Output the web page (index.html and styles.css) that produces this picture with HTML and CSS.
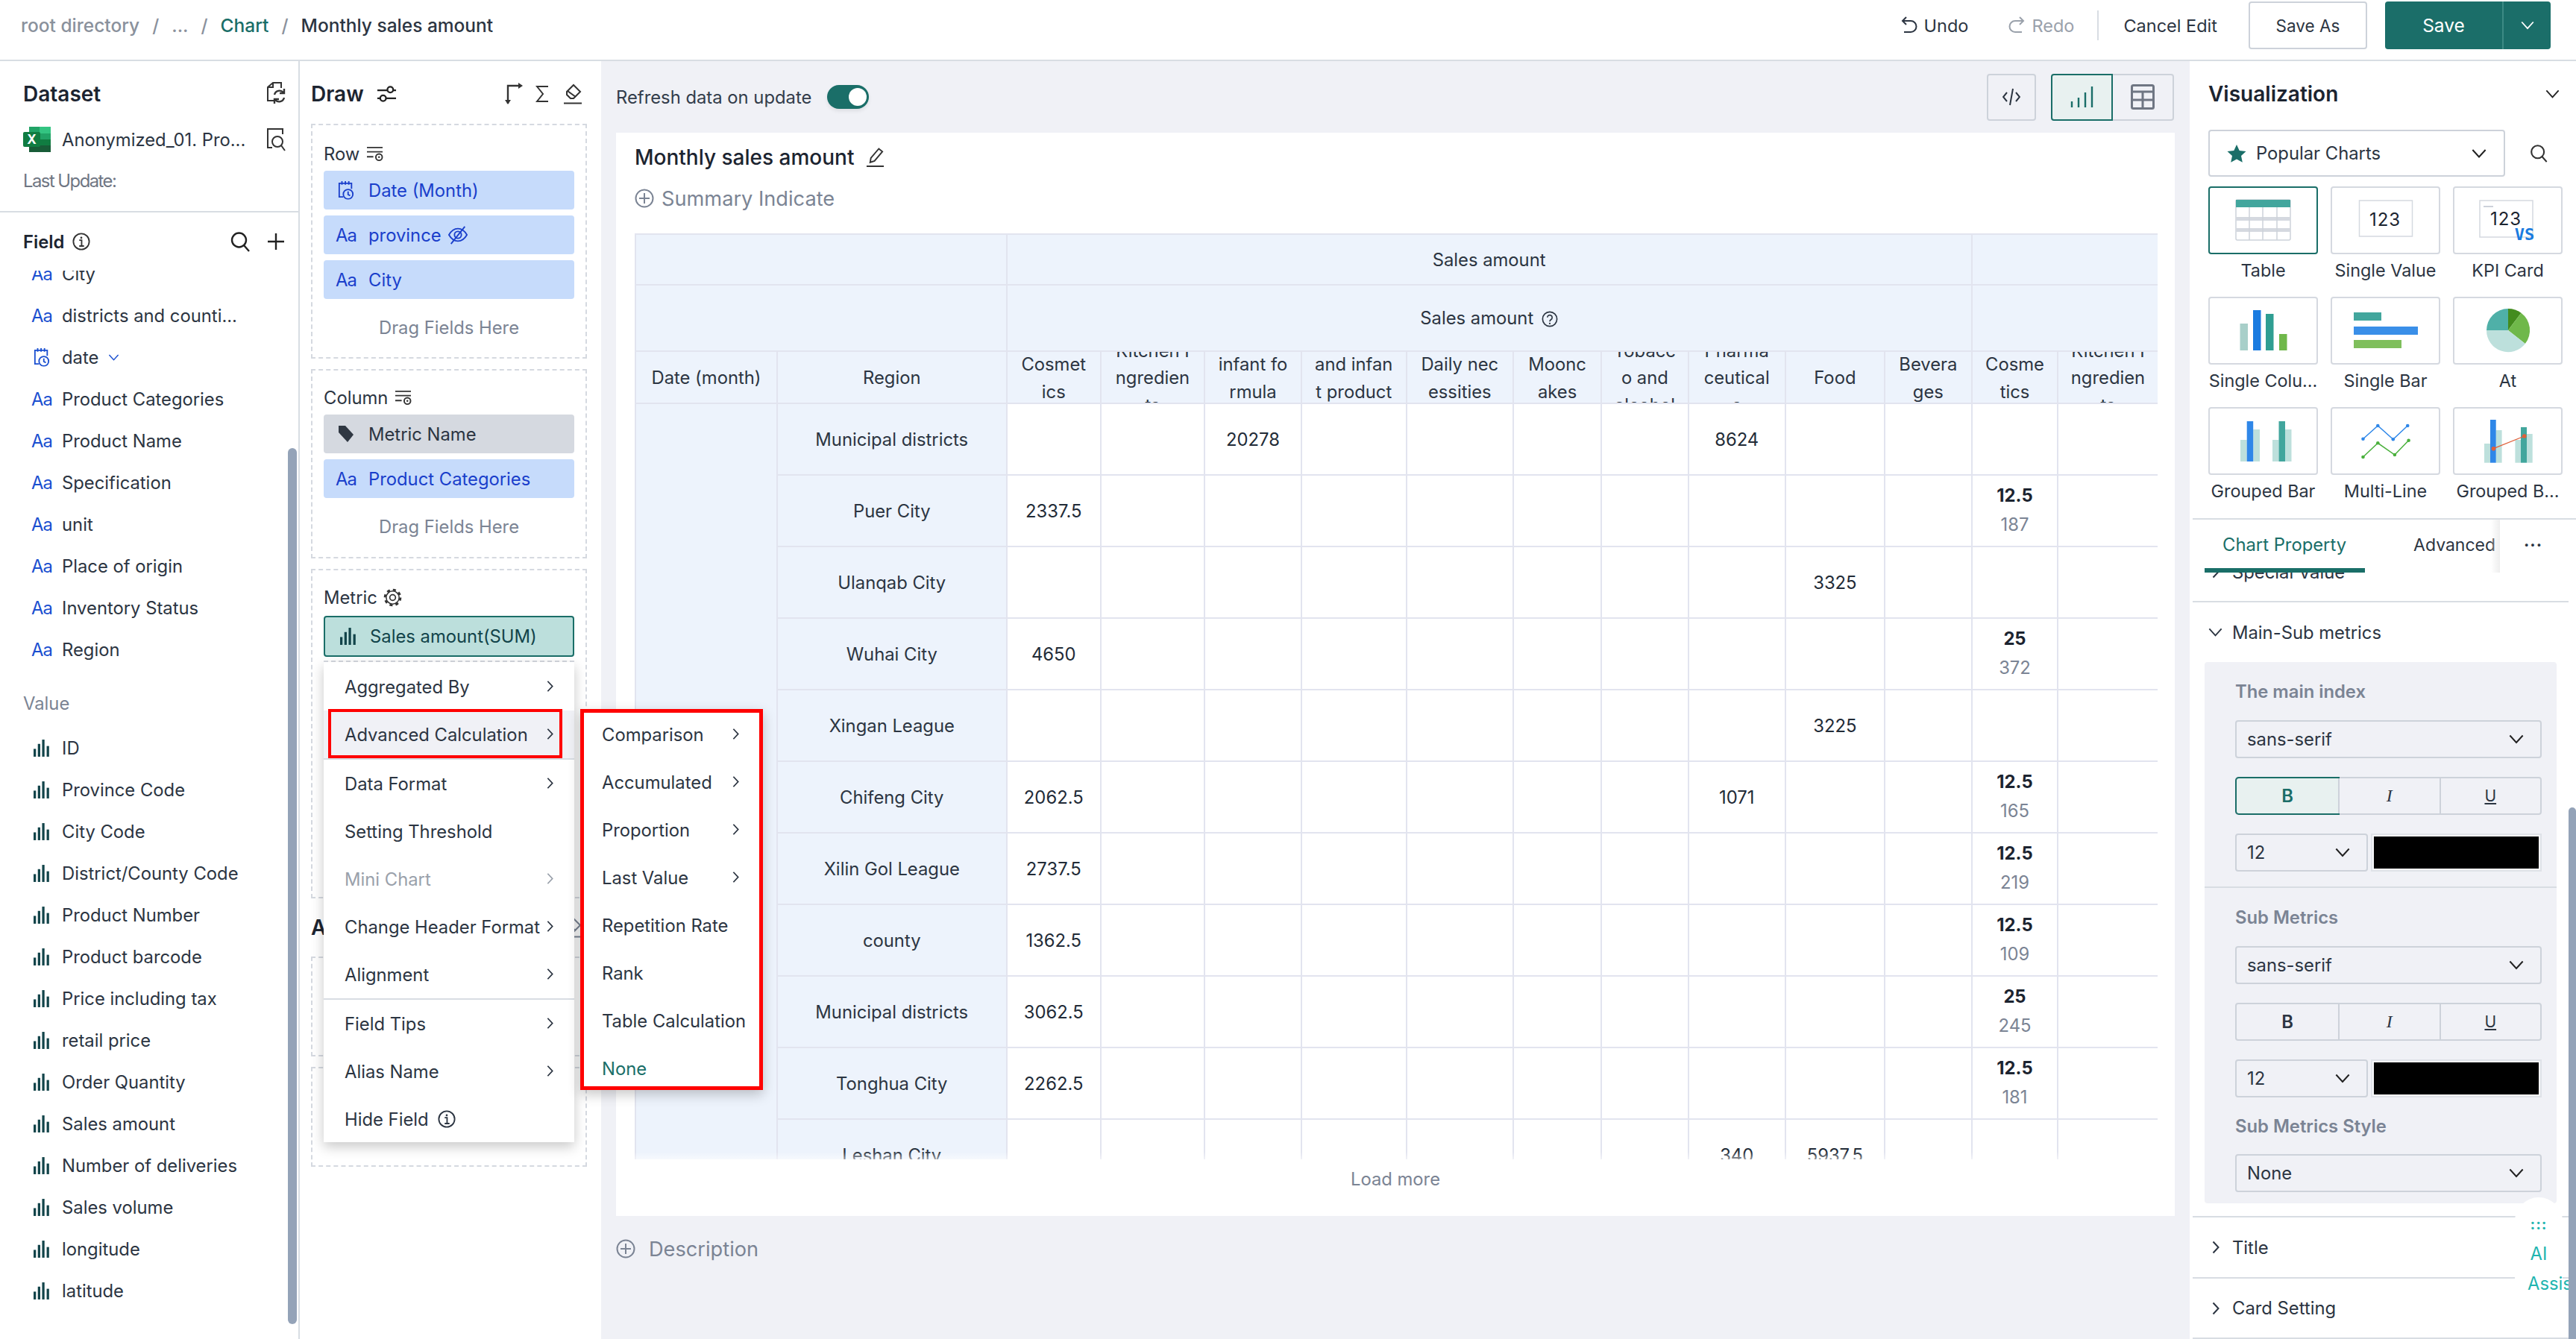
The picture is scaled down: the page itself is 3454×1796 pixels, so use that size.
FILE: index.html
```html
<!DOCTYPE html>
<html lang="en">
<head>
<meta charset="utf-8">
<title>Monthly sales amount</title>
<link rel="stylesheet" href="styles.css">
</head>
<body>
<svg class="defs" xmlns="http://www.w3.org/2000/svg">
  <symbol id="bars" viewBox="0 0 22 24"><rect x="0" y="13" width="3.4" height="11"/><rect x="6" y="6" width="3.4" height="18"/><rect x="12" y="0" width="3.4" height="24"/><rect x="18.4" y="9" width="3.4" height="15"/></symbol>
  <symbol id="cal" viewBox="0 0 24 28"><path d="M8 24H2V4h18v8M6 1v5M11 1v5M16 1v5" fill="none" stroke="currentColor" stroke-width="2"/><circle cx="15" cy="20" r="7" fill="none" stroke="currentColor" stroke-width="2"/><path d="M15 16v4.500l3 1.500" fill="none" stroke="currentColor" stroke-width="2"/></symbol>
  <symbol id="cr" viewBox="0 0 10 18"><path d="M1.500 1.500l7 7.500-7 7.500" fill="none" stroke="currentColor" stroke-width="2"/></symbol>
  <symbol id="cd" viewBox="0 0 22 14"><path d="M1.500 1.500L11 12l9.500-10.500" fill="none" stroke="currentColor" stroke-width="2.200"/></symbol>
  <symbol id="info" viewBox="0 0 26 26"><circle cx="13" cy="13" r="11.500" fill="none" stroke="currentColor" stroke-width="2"/><circle cx="13" cy="7.500" r="1.500" fill="currentColor"/><path d="M10 11h3.500v8M10 19.500h7" fill="none" stroke="currentColor" stroke-width="2"/></symbol>
  <symbol id="plusc" viewBox="0 0 26 26"><circle cx="13" cy="13" r="11.500" fill="none" stroke="currentColor" stroke-width="2"/><path d="M13 6v14M6 13h14" fill="none" stroke="currentColor" stroke-width="2"/></symbol>
  <symbol id="search" viewBox="0 0 26 28"><circle cx="11.500" cy="12" r="9.500" fill="none" stroke="currentColor" stroke-width="2.400"/><path d="M18 19l7 8" fill="none" stroke="currentColor" stroke-width="2.400"/></symbol>
  <symbol id="plus" viewBox="0 0 24 24"><path d="M12 1v22M1 12h22" fill="none" stroke="currentColor" stroke-width="2.400"/></symbol>
  <symbol id="sort" viewBox="0 0 24 22"><path d="M1 2h22M1 8h22M1 15h9" fill="none" stroke="currentColor" stroke-width="2"/><circle cx="18" cy="15.500" r="4.500" fill="none" stroke="currentColor" stroke-width="2"/><circle cx="18" cy="15.500" r="1.300" fill="currentColor"/></symbol>
  <symbol id="eraser" viewBox="0 0 26 28"><path d="M14 2l9 9-9 9-4 0-5-5v-4z" fill="none" stroke="currentColor" stroke-width="2"/><path d="M6 10l11 8" fill="none" stroke="currentColor" stroke-width="2"/><path d="M1 26.500h24" fill="none" stroke="currentColor" stroke-width="2"/></symbol>
  <symbol id="pencil" viewBox="0 0 26 28"><path d="M18 2l5 4-11 13-6 2 1-6z" fill="none" stroke="currentColor" stroke-width="2"/><path d="M1 26.500h24" fill="none" stroke="currentColor" stroke-width="2"/></symbol>
</svg>

<div class="app">
  <header class="topbar">
    <nav class="crumbs">
      <span class="mute">root directory</span><span class="sep">/</span><span class="mute">...</span><span class="sep">/</span><span class="crumb-link">Chart</span><span class="sep">/</span><span class="crumb-cur">Monthly sales amount</span>
    </nav>
    <div class="actions">
      <span class="act"><svg class="i20" viewBox="0 0 22 24"><path d="M7 1L2 6l5 5M2 6h11a7.500 7.500 0 0 1 0 15H4" fill="none" stroke="currentColor" stroke-width="2"/></svg>Undo</span>
      <span class="act dis"><svg class="i20" viewBox="0 0 22 24"><path d="M15 1l5 5-5 5M20 6H9a7.500 7.500 0 0 0 0 15h9" fill="none" stroke="currentColor" stroke-width="2"/></svg>Redo</span>
      <span class="vsep"></span>
      <span class="cancel">Cancel Edit</span>
      <span class="btn-out">Save As</span>
      <span class="btn-save"><span class="sv">Save</span><span class="sv-d"><svg class="chev" viewBox="0 0 22 14"><use href="#cd"/></svg></span></span>
    </div>
  </header>

  <main class="main">
    <aside class="left">
      <div class="head"><h2 class="h2">Dataset</h2>
        <svg class="ic26" viewBox="0 0 26 34"><path d="M10 26H2V8l7-6h11v7M9 2v6H2" fill="none" stroke="#333" stroke-width="2"/><path d="M11 18a7 7 0 0 1 12-3M24 22a7 7 0 0 1-12 3M24 10v6h-6M11 30v-6h6" fill="none" stroke="#333" stroke-width="2.400"/></svg>
      </div>
      <div class="ds-row">
        <svg class="excel" viewBox="0 0 37 34"><rect x="8" width="29" height="34" rx="2" fill="#21a366"/><rect x="8" y="0" width="14" height="9" fill="#21a366"/><rect x="22" y="0" width="15" height="9" fill="#33c481"/><rect x="22" y="9" width="15" height="8" fill="#21a366"/><rect x="22" y="17" width="15" height="8" fill="#107c41"/><rect x="8" y="25" width="29" height="9" fill="#185c37"/><rect y="7" width="23" height="20" rx="2" fill="#107c41"/><text x="11.500" y="23" class="xl">X</text></svg>
        <span class="ds-name">Anonymized_01. Pro...</span>
        <svg class="ic26" viewBox="0 0 26 34"><path d="M8 28H2V3h20v7" fill="none" stroke="#333" stroke-width="2"/><circle cx="15" cy="20" r="7" fill="none" stroke="#333" stroke-width="2"/><path d="M20 25l5 7" stroke="#333" stroke-width="2"/></svg>
      </div>
      <div class="last">Last Update:</div>
      <div class="field-head">
        <span class="fh-title">Field</span>
        <svg class="ic24 mlr" viewBox="0 0 26 26"><use href="#info"/></svg>
        <span class="spacer"></span>
        <svg class="ic-s" viewBox="0 0 26 28"><use href="#search"/></svg>
        <svg class="ic-p" viewBox="0 0 24 24"><use href="#plus"/></svg>
      </div>
      <div class="list">
        <div class="list-in">
          <div class="fr"><span class="aa">Aa</span>City</div>
          <div class="fr"><span class="aa">Aa</span>districts and counti...</div>
          <div class="fr"><span class="fi"><svg class="cal" viewBox="0 0 24 28"><use href="#cal"/></svg></span>date<svg class="small-d" viewBox="0 0 22 14"><use href="#cd"/></svg></div>
          <div class="fr"><span class="aa">Aa</span>Product Categories</div>
          <div class="fr"><span class="aa">Aa</span>Product Name</div>
          <div class="fr"><span class="aa">Aa</span>Specification</div>
          <div class="fr"><span class="aa">Aa</span>unit</div>
          <div class="fr"><span class="aa">Aa</span>Place of origin</div>
          <div class="fr"><span class="aa">Aa</span>Inventory Status</div>
          <div class="fr"><span class="aa">Aa</span>Region</div>
          <div class="group">Value</div>
          <div class="fr"><span class="fi"><svg class="bar" viewBox="0 0 22 24"><use href="#bars"/></svg></span>ID</div>
          <div class="fr"><span class="fi"><svg class="bar" viewBox="0 0 22 24"><use href="#bars"/></svg></span>Province Code</div>
          <div class="fr"><span class="fi"><svg class="bar" viewBox="0 0 22 24"><use href="#bars"/></svg></span>City Code</div>
          <div class="fr"><span class="fi"><svg class="bar" viewBox="0 0 22 24"><use href="#bars"/></svg></span>District/County Code</div>
          <div class="fr"><span class="fi"><svg class="bar" viewBox="0 0 22 24"><use href="#bars"/></svg></span>Product Number</div>
          <div class="fr"><span class="fi"><svg class="bar" viewBox="0 0 22 24"><use href="#bars"/></svg></span>Product barcode</div>
          <div class="fr"><span class="fi"><svg class="bar" viewBox="0 0 22 24"><use href="#bars"/></svg></span>Price including tax</div>
          <div class="fr"><span class="fi"><svg class="bar" viewBox="0 0 22 24"><use href="#bars"/></svg></span>retail price</div>
          <div class="fr"><span class="fi"><svg class="bar" viewBox="0 0 22 24"><use href="#bars"/></svg></span>Order Quantity</div>
          <div class="fr"><span class="fi"><svg class="bar" viewBox="0 0 22 24"><use href="#bars"/></svg></span>Sales amount</div>
          <div class="fr"><span class="fi"><svg class="bar" viewBox="0 0 22 24"><use href="#bars"/></svg></span>Number of deliveries</div>
          <div class="fr"><span class="fi"><svg class="bar" viewBox="0 0 22 24"><use href="#bars"/></svg></span>Sales volume</div>
          <div class="fr"><span class="fi"><svg class="bar" viewBox="0 0 22 24"><use href="#bars"/></svg></span>longitude</div>
          <div class="fr"><span class="fi"><svg class="bar" viewBox="0 0 22 24"><use href="#bars"/></svg></span>latitude</div>
        </div>
      </div>
      <div class="sb-left"></div>
    </aside>

    <section class="draw">
      <div class="head draw-head">
        <h2 class="h2">Draw</h2>
        <svg class="ic-slid" viewBox="0 0 28 24"><path d="M1 7h14M23 7h4M1 18h4M13 18h14" fill="none" stroke="#222" stroke-width="2.400"/><circle cx="19" cy="6" r="4" fill="none" stroke="#222" stroke-width="2.400"/><circle cx="9" cy="18" r="4" fill="none" stroke="#222" stroke-width="2.400"/></svg>
        <span class="spacer"></span>
        <svg class="ic-ax" viewBox="0 0 24 30"><path d="M4 28V4h16" fill="none" stroke="#333" stroke-width="2.400"/><path d="M0 23l4 6 4-6zM18 0l6 4-6 4z" fill="#333"/></svg>
        <svg class="ic-sig" viewBox="0 0 18 24"><path d="M17 2H2l8 10-8 10h15" fill="none" stroke="#333" stroke-width="2"/></svg>
        <svg class="ic-er" viewBox="0 0 26 28"><use href="#eraser"/></svg>
      </div>
      <div class="box box-row">
        <div class="blabel">Row<svg class="sorti" viewBox="0 0 24 22"><use href="#sort"/></svg></div>
        <div class="pill"><span class="pi"><svg class="cal" viewBox="0 0 24 28"><use href="#cal"/></svg></span>Date (Month)</div>
        <div class="pill"><span class="pa">Aa</span>province<svg class="eye" viewBox="0 0 28 28"><path d="M1 14c4-7 8-9 13-9s9 2 13 9c-4 7-8 9-13 9s-9-2-13-9z" fill="none" stroke="currentColor" stroke-width="2"/><circle cx="14" cy="14" r="5" fill="none" stroke="currentColor" stroke-width="2"/><path d="M24 2L4 27" stroke="currentColor" stroke-width="2"/></svg></div>
        <div class="pill"><span class="pa">Aa</span>City</div>
        <div class="drag">Drag Fields Here</div>
      </div>
      <div class="box box-col">
        <div class="blabel up">Column<svg class="sorti" viewBox="0 0 24 22"><use href="#sort"/></svg></div>
        <div class="pill pill-gray"><span class="pi"><svg class="tag" viewBox="0 0 22 24"><path d="M1 1h9l11 12-8 10L1 10z" fill="#2f3742"/></svg></span>Metric Name</div>
        <div class="pill"><span class="pa">Aa</span>Product Categories</div>
        <div class="drag">Drag Fields Here</div>
      </div>
      <div class="box box-metric">
        <div class="blabel up mt">Metric<svg class="gear" viewBox="0 0 26 26"><circle cx="13" cy="13" r="10.800" fill="none" stroke="#333" stroke-width="3" stroke-dasharray="4.240 4.240"/><circle cx="13" cy="13" r="9" fill="none" stroke="#333" stroke-width="1.600"/><circle cx="13" cy="13" r="4" fill="none" stroke="#333" stroke-width="1.800"/></svg></div>
        <div class="pill-metric"><svg class="bar" viewBox="0 0 22 24"><use href="#bars"/></svg>Sales amount(SUM)</div>
        <div class="mdrag"></div>
      </div>
      <div class="a-row"><h2 class="h2 a-title">A</h2><span class="spacer"></span><svg class="ic-er gray" viewBox="0 0 26 28"><use href="#eraser"/></svg></div>
      <div class="box box-s"></div>
      <div class="box box-s"><div class="drag-l">Drag Fields Here</div></div>
    </section>

    <section class="canvas">
      <div class="tool">
        <span class="refresh">Refresh data on update</span>
        <span class="toggle"><span class="knob"></span></span>
        <span class="spacer"></span>
        <span class="tbtn"><svg class="code" viewBox="0 0 24 26"><path d="M6 7l-5 6 5 6M18 7l5 6-5 6M14 2l-4 22" fill="none" stroke="#2b3440" stroke-width="2"/></svg></span>
        <span class="seg">
          <span class="seg-a"><svg class="sig" viewBox="0 0 32 28"><path d="M2 28v-8M11 28V15M20 28V8M29 28V0" stroke="#1a6e68" stroke-width="2.400"/></svg></span>
          <span class="seg-b"><svg class="tbl" viewBox="0 0 32 34"><rect x="1.500" y="1.500" width="29" height="31" rx="2" fill="none" stroke="#6f7683" stroke-width="3"/><path d="M1 10h30M1 21h30M16 10v23" stroke="#6f7683" stroke-width="3"/></svg></span>
        </span>
      </div>
      <div class="card">
        <div class="c-title"><span>Monthly sales amount</span><svg class="pen" viewBox="0 0 26 28"><use href="#pencil"/></svg></div>
        <div class="c-sum"><svg class="pc" viewBox="0 0 26 26"><use href="#plusc"/></svg>Summary Indicate</div>
        <div class="tw">
          <table class="t">
            <colgroup>
              <col class="w1"><col class="w2"><col class="w3"><col class="w4"><col class="w5"><col class="w6"><col class="w7"><col class="w8"><col class="w9"><col class="w10"><col class="w11"><col class="w12"><col class="w13"><col class="w14">
            </colgroup>
            <tr class="h1"><th colspan="2"></th><th colspan="10">Sales amount</th><th colspan="2"></th></tr>
            <tr class="h2r"><th colspan="2"></th><th colspan="10">Sales amount <svg class="q" viewBox="0 0 24 24"><circle cx="12" cy="12" r="10.500" fill="none" stroke="currentColor" stroke-width="1.800"/><path d="M8.500 9.500a3.500 3.500 0 1 1 5.500 3c-1.500 1-2 1.500-2 3" fill="none" stroke="currentColor" stroke-width="1.800"/><circle cx="12" cy="18.500" r="1.200" fill="currentColor"/></svg></th><th colspan="2"></th></tr>
            <tr class="h3">
              <th><div class="hc">Date (month)</div></th><th><div class="hc">Region</div></th>
              <th><div class="hc">Cosmet<br>ics</div></th><th><div class="hc">Kitchen I<br>ngredien<br>ts</div></th><th><div class="hc">infant fo<br>rmula</div></th><th><div class="hc">and infan<br>t product</div></th><th><div class="hc">Daily nec<br>essities</div></th><th><div class="hc">Moonc<br>akes</div></th><th><div class="hc">Tobacc<br>o and<br>alcohol</div></th><th><div class="hc">Pharma<br>ceutical<br>s</div></th><th><div class="hc">Food</div></th><th><div class="hc">Bevera<br>ges</div></th><th><div class="hc">Cosme<br>tics</div></th><th><div class="hc">Kitchen I<br>ngredien<br>ts</div></th>
            </tr>
            <tr><td class="dim" rowspan="11"></td><td class="dim">Municipal districts</td><td></td><td></td><td>20278</td><td></td><td></td><td></td><td></td><td>8624</td><td></td><td></td><td></td><td></td></tr>
            <tr><td class="dim">Puer City</td><td>2337.5</td><td></td><td></td><td></td><td></td><td></td><td></td><td></td><td></td><td></td><td><b>12.5</b><i>187</i></td><td></td></tr>
            <tr><td class="dim">Ulanqab City</td><td></td><td></td><td></td><td></td><td></td><td></td><td></td><td></td><td>3325</td><td></td><td></td><td></td></tr>
            <tr><td class="dim">Wuhai City</td><td>4650</td><td></td><td></td><td></td><td></td><td></td><td></td><td></td><td></td><td></td><td><b>25</b><i>372</i></td><td></td></tr>
            <tr><td class="dim">Xingan League</td><td></td><td></td><td></td><td></td><td></td><td></td><td></td><td></td><td>3225</td><td></td><td></td><td></td></tr>
            <tr><td class="dim">Chifeng City</td><td>2062.5</td><td></td><td></td><td></td><td></td><td></td><td></td><td>1071</td><td></td><td></td><td><b>12.5</b><i>165</i></td><td></td></tr>
            <tr><td class="dim">Xilin Gol League</td><td>2737.5</td><td></td><td></td><td></td><td></td><td></td><td></td><td></td><td></td><td></td><td><b>12.5</b><i>219</i></td><td></td></tr>
            <tr><td class="dim">county</td><td>1362.5</td><td></td><td></td><td></td><td></td><td></td><td></td><td></td><td></td><td></td><td><b>12.5</b><i>109</i></td><td></td></tr>
            <tr><td class="dim">Municipal districts</td><td>3062.5</td><td></td><td></td><td></td><td></td><td></td><td></td><td></td><td></td><td></td><td><b>25</b><i>245</i></td><td></td></tr>
            <tr><td class="dim">Tonghua City</td><td>2262.5</td><td></td><td></td><td></td><td></td><td></td><td></td><td></td><td></td><td></td><td><b>12.5</b><i>181</i></td><td></td></tr>
            <tr><td class="dim">Leshan City</td><td></td><td></td><td></td><td></td><td></td><td></td><td></td><td>340</td><td>5937.5</td><td></td><td></td><td></td></tr>
          </table>
          <div class="fade"></div>
        </div>
        <div class="more">Load more</div>
      </div>
      <div class="desc"><svg class="pc" viewBox="0 0 26 26"><use href="#plusc"/></svg>Description</div>
    </section>

    <aside class="right">
      <div class="r-head"><h2 class="h2 vis">Visualization</h2><svg class="r-chev" viewBox="0 0 22 14"><use href="#cd"/></svg></div>
      <div class="r-sel">
        <div class="sel-pop"><svg class="star" viewBox="0 0 26 26"><path d="M13 1l3.700 8 8.800 1-6.500 6 1.800 8.800L13 20.400 5.200 24.800 7 16 .5 10l8.800-1z" fill="#1a6e68"/></svg>Popular Charts<span class="spacer"></span><svg class="sel-c" viewBox="0 0 22 14"><use href="#cd"/></svg></div>
        <svg class="r-search" viewBox="0 0 26 28"><use href="#search"/></svg>
      </div>
      <div class="charts">
        <div class="ch"><div class="thumb on"><svg viewBox="0 0 147 91"><rect x="37" y="18" width="73" height="54" rx="2" fill="#fff" stroke="#cdd2da" stroke-width="1.500"/><rect x="37" y="18" width="73" height="10" fill="#42a69d"/><rect x="37" y="41" width="73" height="5" fill="#d5d9e0"/><rect x="37" y="56" width="73" height="5" fill="#d5d9e0"/><path d="M55 28v44M73 28v44M92 28v44" stroke="#cdd2da" stroke-width="1.500"/></svg></div><span>Table</span></div>
        <div class="ch"><div class="thumb"><svg viewBox="0 0 147 91"><rect x="38.500" y="19" width="71" height="48" fill="#fff" stroke="#d5d9e0" stroke-width="1.500"/><text x="73" y="53" class="n123">123</text></svg></div><span>Single Value</span></div>
        <div class="ch"><div class="thumb"><svg viewBox="0 0 147 91"><rect x="36" y="19" width="71" height="49" fill="#fff" stroke="#d5d9e0" stroke-width="1.500"/><rect x="41" y="26" width="13" height="2" fill="#cdd2da"/><text x="71" y="52" class="n123">123</text><text x="96" y="72" class="vs">VS</text></svg></div><span>KPI Card</span></div>
        <div class="ch"><div class="thumb"><svg viewBox="0 0 147 91"><rect x="42.500" y="36" width="10.500" height="36" fill="#a8cfc9"/><rect x="60" y="18" width="10.500" height="54" fill="#1a7be0"/><rect x="77" y="23" width="10.500" height="49" fill="#2f9e92"/><rect x="95" y="50" width="10.500" height="22" fill="#6fb84a"/></svg></div><span>Single Colu...</span></div>
        <div class="ch"><div class="thumb"><svg viewBox="0 0 147 91"><rect x="31" y="21" width="37" height="11" fill="#42a69d"/><rect x="31" y="40" width="86" height="11" fill="#3a8fe8"/><rect x="31" y="58" width="64" height="11" fill="#7fbf5c"/></svg></div><span>Single Bar</span></div>
        <div class="ch"><div class="thumb"><svg viewBox="0 0 147 91"><path d="M74 45L74 16A29 29 0 0 1 91.500 21.800z" fill="#438c1e"/><path d="M74 45L91.500 21.800A29 29 0 0 1 96.900 62.900z" fill="#6fb84a"/><path d="M74 45L96.900 62.900A29 29 0 0 1 45 45z" fill="#bde0dc"/><path d="M74 45L45 45A29 29 0 0 1 74 16z" fill="#4fb0a8"/></svg></div><span>At</span></div>
        <div class="ch"><div class="thumb"><svg viewBox="0 0 147 91"><rect x="43" y="44" width="8.700" height="29" fill="#bde0dc"/><rect x="60.200" y="30" width="8.800" height="43" fill="#bde0dc"/><rect x="51.700" y="19" width="8.500" height="54" fill="#2f87e8"/><rect x="86" y="44" width="8.500" height="29" fill="#bde0dc"/><rect x="103" y="30" width="8.500" height="43" fill="#bde0dc"/><rect x="94.500" y="19" width="8.500" height="54" fill="#42a69d"/></svg></div><span>Grouped Bar</span></div>
        <div class="ch"><div class="thumb"><svg viewBox="0 0 147 91"><path d="M43.500 42.700L63.300 25 83.800 43.300 103.200 25" fill="none" stroke="#2f87e8" stroke-width="1.500"/><path d="M43.500 67L63.300 48.300 85.900 64 104.600 44.700" fill="none" stroke="#4ab03c" stroke-width="1.500"/><g fill="#2f87e8"><circle cx="43.500" cy="42.700" r="2.300"/><circle cx="63.300" cy="25" r="2.300"/><circle cx="83.800" cy="43.300" r="2.300"/><circle cx="103.200" cy="25" r="2.300"/></g><g fill="#4ab03c"><circle cx="43.500" cy="67" r="2.300"/><circle cx="63.300" cy="48.300" r="2.300"/><circle cx="85.900" cy="64" r="2.300"/><circle cx="104.600" cy="44.700" r="2.300"/></g></svg></div><span>Multi-Line</span></div>
        <div class="ch"><div class="thumb"><svg viewBox="0 0 147 91"><rect x="42" y="49" width="8" height="25.700" fill="#bde0dc"/><rect x="57.600" y="31" width="8" height="43.700" fill="#bde0dc"/><rect x="50" y="17" width="7.700" height="57.700" fill="#2f87e8"/><rect x="83.400" y="44" width="7.700" height="30.700" fill="#bde0dc"/><rect x="99" y="36" width="7.700" height="38.700" fill="#bde0dc"/><rect x="91" y="27" width="8" height="47.700" fill="#42a69d"/><path d="M54.400 55.700L95.800 39" stroke="#e0603a" stroke-width="1.300"/><circle cx="54.400" cy="55.700" r="2.800" fill="#e0603a"/><circle cx="95.800" cy="39" r="2.800" fill="#e0603a"/></svg></div><span>Grouped B...</span></div>
      </div>
      <div class="tabs">
        <span class="tab-a">Chart Property</span><span class="tab-b">Advanced</span>
        <span class="tab-fade"></span><span class="tab-dots">...</span>
        <span class="tab-line"></span>
      </div>
      <div class="props">
        <div class="props-in">
          <div class="sec sec-special"><svg class="c10" viewBox="0 0 10 18"><use href="#cr"/></svg>Special Value</div>
          <div class="sec-open"><svg class="c-open" viewBox="0 0 22 14"><use href="#cd"/></svg>Main-Sub metrics</div>
          <div class="psub">
            <div class="pgroup">
              <div class="plabel">The main index</div>
              <div class="psel">sans-serif<svg class="pc-d" viewBox="0 0 22 14"><use href="#cd"/></svg></div>
              <div class="biu"><span class="b on">B</span><span class="it">I</span><span class="un">U</span></div>
              <div class="szrow"><div class="psel sz">12<svg class="pc-d" viewBox="0 0 22 14"><use href="#cd"/></svg></div><div class="swatch"><span></span></div></div>
            </div>
            <div class="pgroup pg2">
              <div class="plabel">Sub Metrics</div>
              <div class="psel">sans-serif<svg class="pc-d" viewBox="0 0 22 14"><use href="#cd"/></svg></div>
              <div class="biu"><span class="b">B</span><span class="it">I</span><span class="un">U</span></div>
              <div class="szrow"><div class="psel sz">12<svg class="pc-d" viewBox="0 0 22 14"><use href="#cd"/></svg></div><div class="swatch"><span></span></div></div>
              <div class="plabel pl3">Sub Metrics Style</div>
              <div class="psel last-s">None<svg class="pc-d" viewBox="0 0 22 14"><use href="#cd"/></svg></div>
            </div>
          </div>
          <div class="sec sec-title"><svg class="c10" viewBox="0 0 10 18"><use href="#cr"/></svg>Title</div>
          <div class="sec"><svg class="c10" viewBox="0 0 10 18"><use href="#cr"/></svg>Card Setting</div>
        </div>
      </div>
      <div class="sb-right"></div>
      <div class="ai"><div class="dots">:::</div><div class="ai-t">AI</div><div class="ai-t2">Assist</div></div>
    </aside>
  </main>

  <div class="menu m1">
    <div class="mi">Aggregated By<svg class="mc" viewBox="0 0 10 18"><use href="#cr"/></svg></div>
    <div class="mi hi">Advanced Calculation<svg class="mc" viewBox="0 0 10 18"><use href="#cr"/></svg></div>
    <div class="mi">Data Format<svg class="mc" viewBox="0 0 10 18"><use href="#cr"/></svg></div>
    <div class="mi">Setting Threshold</div>
    <div class="mi off">Mini Chart<svg class="mc" viewBox="0 0 10 18"><use href="#cr"/></svg></div>
    <div class="mi">Change Header Format<svg class="mc" viewBox="0 0 10 18"><use href="#cr"/></svg></div>
    <div class="mi rule">Alignment<svg class="mc" viewBox="0 0 10 18"><use href="#cr"/></svg></div>
    <div class="mi">Field Tips<svg class="mc" viewBox="0 0 10 18"><use href="#cr"/></svg></div>
    <div class="mi">Alias Name<svg class="mc" viewBox="0 0 10 18"><use href="#cr"/></svg></div>
    <div class="mi">Hide Field<svg class="hinfo" viewBox="0 0 26 26"><use href="#info"/></svg></div>
  </div>
  <div class="redbox"></div>
  <div class="menu m2">
    <div class="mi">Comparison<svg class="mc" viewBox="0 0 10 18"><use href="#cr"/></svg></div>
    <div class="mi">Accumulated<svg class="mc" viewBox="0 0 10 18"><use href="#cr"/></svg></div>
    <div class="mi">Proportion<svg class="mc" viewBox="0 0 10 18"><use href="#cr"/></svg></div>
    <div class="mi">Last Value<svg class="mc" viewBox="0 0 10 18"><use href="#cr"/></svg></div>
    <div class="mi">Repetition Rate</div>
    <div class="mi">Rank</div>
    <div class="mi">Table Calculation</div>
    <div class="mi sel-teal">None</div>
  </div>
</div>
</body>
</html>
```

FILE: styles.css
```css
* { box-sizing: border-box; }
html, body { margin: 0; padding: 0; height: 100%; overflow: hidden; background: #fff; }
body { font-family: Inter, "Liberation Sans", sans-serif; font-size: 23.8px; color: #2c3542; }
.defs { display: none; }
.spacer { flex: 1; }
.app { position: relative; width: 3454px; height: 1796px; display: flex; flex-direction: column; overflow: hidden; }

/* top bar */
.topbar { height: 82px; border-bottom: 2px solid #d8dde3; display: flex; align-items: center; padding: 0 34px 12px 28px; flex: none; }
.crumbs { display: flex; align-items: center; font-size: 24.5px; font-weight: 500; flex: 1; }
.mute { color: #8a919c; }
.sep { color: #8a919c; margin: 0 17px; }
.crumb-link { color: #1a6e68; font-weight: 500; }
.crumb-cur { color: #2c3542; font-weight: 500; }
.actions { display: flex; align-items: center; height: 64px; font-size: 23.5px; }
.act { display: flex; align-items: center; gap: 9px; margin-right: 54px; }
.act.dis { color: #9aa1ab; margin-right: 31px; }
.i20 { width: 22px; height: 24px; }
.vsep { width: 2px; height: 40px; background: #d8dde3; margin-right: 33px; }
.cancel { margin-right: 42px; }
.btn-out { width: 159px; height: 64px; border: 2px solid #cdd2da; border-radius: 4px; display: flex; align-items: center; justify-content: center; margin-right: 24px; font-size: 22.5px; }
.btn-save { width: 222px; height: 64px; background: #1b6e69; border-radius: 4px; color: #fff; display: flex; font-size: 24.5px; }
.sv { flex: 1; display: flex; align-items: center; justify-content: center; }
.sv-d { width: 65px; border-left: 2px solid #3c8a84; display: flex; align-items: center; justify-content: center; }
.chev { width: 18px; height: 12px; color: #fff; }

.main { flex: 1; display: flex; min-height: 0; }
.head { display: flex; align-items: center; height: 84px; padding: 3px 17px 0 31px; justify-content: space-between; }
.h2 { margin: 0; font-size: 28px; font-weight: 600; color: #1c2430; line-height: 1; }

/* left panel */
.left { width: 402px; border-right: 2px solid #d8dde3; position: relative; display: flex; flex-direction: column; flex: none; }
.ic26 { width: 26px; height: 34px; }
.ds-row { display: flex; align-items: center; height: 38px; margin-top: 2px; padding: 0 17px 0 31px; }
.excel { width: 37px; height: 34px; margin-right: 15px; flex: none; }
.xl { font: 700 17px Inter, sans-serif; fill: #fff; text-anchor: middle; }
.ds-name { flex: 1; white-space: nowrap; }
.last { margin: 19px 0 0 31px; height: 58px; color: #6f7683; letter-spacing: -1.5px; line-height: 36px; }
.field-head { border-top: 2px solid #d8dde3; height: 80px; display: flex; align-items: center; padding: 0 18px 0 31px; font-weight: 500; color: #1c2430; }
.fh-title { font-weight: 600; font-size: 23.8px; }
.ic24 { width: 24px; height: 24px; }
.mlr { margin-left: 11px; color: #333; }
.ic-s { width: 26px; height: 28px; color: #222; margin-right: 23px; }
.ic-p { width: 24px; height: 24px; color: #222; }
.list { flex: 1; overflow: hidden; min-height: 0; }
.list-in { margin-top: -24px; }
.fr { height: 56px; display: flex; align-items: center; padding-left: 42px; white-space: nowrap; }
.aa { width: 41px; color: #1a4fd0; flex: none; letter-spacing: -1px; }
.fi { width: 41px; flex: none; display: flex; align-items: center; padding-left: 3px; }
.cal { width: 22px; height: 26px; color: #1a4fd0; }
.bar { width: 21px; height: 23px; fill: #12444a; }
.small-d { width: 15px; height: 9px; margin-left: 13px; color: #1a4fd0; }
.group { height: 76px; padding: 32px 0 0 31px; line-height: 26px; color: #7b8494; }
.sb-left { position: absolute; right: 2px; top: 519px; width: 12px; height: 1175px; background: #94a3b8; border-radius: 6px; }

/* draw */
.draw { width: 404px; flex: none; padding: 0 19px 0 15px; position: relative; }
.draw-head { padding: 3px 6px 0 0; justify-content: flex-start; }
.ic-slid { width: 27px; height: 24px; margin-left: 17px; }
.ic-ax { width: 24px; height: 30px; }
.ic-sig { width: 18px; height: 24px; margin-left: 17px; }
.ic-er { width: 26px; height: 28px; margin-left: 19px; color: #333; }
.ic-er.gray { color: #7b8494; margin-left: 0; margin-right: 6px; }
.box { width: 370px; border: 2px dashed #d5d9e0; padding: 0 15px; margin-bottom: 14px; }
.box-row { height: 315px; }
.box-col { height: 254px; }
.box-metric { height: 442px; margin-bottom: 0; }
.box-s { height: 134px; position: relative; }
.blabel { display: flex; align-items: center; height: 30px; margin: 23px 0 8px; }
.blabel.up { margin-top: 21px; }
.blabel.mt { margin-bottom: 10px; }
.sorti { width: 23px; height: 21px; margin-left: 9px; color: #333; }
.gear { width: 25px; height: 25px; margin-left: 8px; }
.pill { height: 52px; background: #c6dbfb; color: #1a3fcb; border-radius: 4px; display: flex; align-items: center; margin-bottom: 8px; }
.pill-gray { background: #d5d9e0; color: #2c3542; }
.pa { width: 44px; margin-left: 16px; flex: none; letter-spacing: -1px; }
.pi { width: 44px; margin-left: 16px; flex: none; display: flex; padding-left: 3px; }
.pi .cal { color: #1a3fcb; }
.tag { width: 22px; height: 24px; }
.eye { width: 26px; height: 26px; margin-left: 9px; }
.drag { height: 60px; display: flex; align-items: center; justify-content: center; color: #7b8494; }
.pill-metric { height: 55px; background: #bcdfdc; border: 2px solid #1a6e68; border-radius: 4px; display: flex; align-items: center; padding-left: 20px; color: #12444a; gap: 19px; }
.pill-metric .bar { fill: #12444a; }
.mdrag { border-top: 2px dashed #d5d9e0; margin-top: 5px; }
.a-row { height: 78px; display: flex; align-items: center; width: 370px; }
.a-title { font-size: 28px; }
.drag-l { position: absolute; left: 0; right: 0; top: 71px; text-align: center; color: #7b8494; }

/* canvas */
.canvas { flex: 1; background: #f0f1f6; padding: 0 20px; min-width: 0; }
.tool { height: 96px; display: flex; align-items: center; }
.refresh { color: #333d4b; }
.toggle { width: 56px; height: 32px; border-radius: 16px; background: #1a6e68; margin-left: 21px; position: relative; flex: none; box-shadow: 0 3px 5px rgba(0,0,0,.08); }
.knob { position: absolute; right: 3px; top: 4px; width: 24px; height: 24px; border-radius: 50%; background: #fff; }
.tbtn { width: 66px; height: 63px; border: 2px solid #cdd2da; border-radius: 4px; display: flex; align-items: center; justify-content: center; margin-right: 20px; }
.code { width: 24px; height: 26px; }
.seg { display: flex; width: 165px; height: 63px; margin-right: 1px; }
.seg-a { width: 83px; background: #e8f1f0; border: 2px solid #1a6e68; border-radius: 4px 0 0 4px; display: flex; align-items: center; justify-content: center; }
.seg-b { flex: 1; border: 2px solid #cdd2da; border-left: 0; border-radius: 0 4px 4px 0; display: flex; align-items: center; justify-content: center; }
.sig { width: 32px; height: 28px; }
.tbl { width: 32px; height: 34px; }
.card { height: 1453px; background: #fff; padding-left: 25px; }
.c-title { height: 66px; display: flex; align-items: center; font-size: 28px; font-weight: 500; color: #1c2430; }
.pen { width: 25px; height: 28px; margin-left: 16px; color: #333; }
.c-sum { height: 44px; display: flex; align-items: center; font-size: 27.2px; color: #7b8494; }
.pc { width: 26px; height: 26px; margin-right: 10px; color: #7b8494; flex: none; }
.tw { margin-top: 25px; width: 2042px; height: 1242px; overflow: hidden; position: relative; }
.t { border-collapse: collapse; table-layout: fixed; width: 2042px; font-size: 23.8px; }
.w1 { width: 190px; } .w2 { width: 307.5px; } .w3 { width: 126.5px; } .w4 { width: 139px; } .w5 { width: 130px; } .w6 { width: 140.5px; } .w7 { width: 143.6px; } .w8 { width: 118px; } .w9 { width: 116.6px; } .w10 { width: 130px; } .w11 { width: 133.4px; } .w12 { width: 116.6px; } .w13 { width: 115.6px; } .w14 { width: 134.400px; }
.t th, .t td { border: 2px solid #e2e4ef; padding: 0; text-align: center; font-weight: 400; color: #2c3542; overflow: hidden; }
.t th { background: #edf3fc; }
.t tr { height: 96px; }
.t tr.h1 { height: 68px; } .t tr.h2r { height: 89px; } .t tr.h3 { height: 70px; }
.hc { height: 68px; padding-top: 3px; line-height: 36.500px; overflow: hidden; white-space: nowrap; display: grid; align-content: center; justify-items: center; }
.q { width: 22px; height: 22px; vertical-align: -4px; margin-left: 4px; }
.dim { background: #edf3fc; }
.t td { color: #222b37; }
.t td.dim { color: #2c3542; }
.t b { display: block; font-weight: 700; color: #1c2430; line-height: 38px; }
.t i { display: block; font-style: normal; color: #7b8494; line-height: 40px; }
.fade { position: absolute; left: 0; right: 0; bottom: 0; height: 10px; background: linear-gradient(rgba(255,255,255,0), rgba(255,255,255,.5)); }
.more { height: 52px; display: flex; align-items: center; justify-content: center; color: #7b8494; margin-left: -25px; }
.desc { height: 88px; display: flex; align-items: center; color: #7b8494; font-size: 27.2px; }
.desc .pc { margin-right: 18px; }

/* right panel */
.right { width: 518px; flex: none; position: relative; }
.r-head { height: 88px; display: flex; align-items: center; justify-content: space-between; padding: 0 22px 0 25px; }
.vis { font-size: 28px; }
.r-chev { width: 19px; height: 12px; color: #222; }
.r-sel { display: flex; align-items: center; height: 63px; margin: 4px 0 13px 25px; }
.sel-pop { width: 398px; height: 63px; border: 2px solid #cdd2da; border-radius: 4px; display: flex; align-items: center; padding: 0 23px 0 23px; }
.star { width: 26px; height: 26px; margin-right: 13px; }
.sel-c { width: 20px; height: 14px; color: #222; }
.r-search { width: 24px; height: 25px; margin-left: 33px; color: #333; }
.charts { display: grid; grid-template-columns: repeat(3, 147px); column-gap: 17px; padding-left: 25px; height: 445px; align-content: start; font-size: 23.4px; }
.ch { height: 148px; text-align: center; white-space: nowrap; }
.ch span { display: block; line-height: 44px; }
.thumb { width: 147px; height: 91px; border: 2px solid #d5d9e0; border-radius: 4px; background: #fff; position: relative; overflow: hidden; }
.thumb.on { border-color: #1a6e68; }
.thumb svg { width: 147px; height: 91px; position: absolute; left: -2px; top: -2px; display: block; }
.n123 { font: 400 24px Inter, sans-serif; letter-spacing: 1px; fill: #1c2430; text-anchor: middle; }
.vs { font: 700 22px "DejaVu Sans Mono", monospace; fill: #1a7be0; text-anchor: middle; }
.tabs { position: relative; height: 73px; margin-left: 4px; border-top: 2px solid #d8dde3; display: flex; align-items: center; padding-bottom: 4px; background: #fff; z-index: 1; }
.tab-a { color: #1a6e68; margin-left: 40px; }
.tab-b { margin-left: 90px; font-size: 23px; }
.tab-fade { position: absolute; left: 400px; top: 0; bottom: 0; width: 12px; background: linear-gradient(90deg, rgba(255,255,255,0), #eee); }
.tab-dots { position: absolute; left: 444px; top: 18px; font-weight: 700; letter-spacing: 1px; line-height: 20px; font-size: 22px; }
.tab-line { position: absolute; left: 16px; bottom: 0; width: 215px; height: 6px; background: #1a6e68; }
.props { height: 1028px; margin-left: 4px; width: 504px; overflow: hidden; }
.props-in { margin-top: -40px; }
.sec { display: flex; align-items: center; height: 81px; border-bottom: 2px solid #d8dde3; padding-left: 26px; color: #2c3542; }
.sec-special { height: 80px; }
.sec-title { border-top: 2px solid #d8dde3; height: 84px; }
.c10 { width: 10px; height: 18px; margin-right: 17px; }
.sec-open { height: 80px; display: flex; align-items: center; padding-left: 21px; color: #2c3542; }
.c-open { width: 19px; height: 12px; margin-right: 13px; }
.psub { margin-left: 16px; width: 472px; background: #f0f1f6; border-radius: 4px; margin-bottom: 17px; }
.pgroup { padding: 25px 20px 20px 41px; }
.pg2 { border-top: 2px solid #d8dde3; padding-bottom: 15px; }
.plabel { height: 30px; line-height: 30px; font-weight: 600; color: #7b8494; margin-bottom: 23px; }
.psel { height: 51px; border: 2px solid #cdd2da; border-radius: 4px; display: flex; align-items: center; justify-content: space-between; padding: 0 22px 0 14px; margin-bottom: 25px; width: 411px; }
.pc-d { width: 20px; height: 13px; color: #222; }
.biu { display: flex; width: 411px; height: 51px; border: 2px solid #cdd2da; border-radius: 4px; margin-bottom: 25px; }
.biu span { flex: 1; display: flex; align-items: center; justify-content: center; border-left: 2px solid #cdd2da; }
.biu .b { border-left: 0; font-weight: 600; flex: 1.02; }
.biu .b.on { background: #e8f1f0; color: #1a6e68; outline: 2px solid #1a6e68; border-radius: 3px 0 0 3px; }
.it { font-family: "Liberation Serif", serif; font-style: italic; }
.un { text-decoration: underline; font-size: 21px; }
.szrow { display: flex; justify-content: space-between; width: 411px; }
.sz { width: 178px; margin-bottom: 0; }
.swatch { width: 229px; height: 51px; border: 2px solid #dfe2e8; background: #f7f8fa; padding: 2px; }
.swatch span { display: block; height: 100%; background: #000; }
.pl3 { margin: 24px 0 22px; }
.last-s { margin-bottom: 0; }
.sb-right { position: absolute; right: 0; top: 1001px; width: 10px; height: 713px; background: #94a3b8; border-radius: 5px 5px 0 0; }
.ai { position: absolute; left: 436px; top: 1524px; width: 64px; height: 151px; background: #fff; border-radius: 32px; color: #1fb5b0; text-align: center; white-space: nowrap; }
.dots { font-weight: 700; line-height: 24px; margin-top: 24px; letter-spacing: 1px; font-size: 20px; }
.ai-t { line-height: 28px; margin-top: 14px; }
.ai-t2 { line-height: 28px; margin-top: 12px; text-align: left; padding-left: 17px; width: 72px; overflow: hidden; }

/* floating menus */
.menu { position: absolute; background: #fff; box-shadow: 0 6px 16px rgba(0,0,0,.22); z-index: 5; }
.m1 { left: 434px; top: 888px; width: 336px; height: 644px; padding-top: 1px; }
.mi { height: 64px; display: flex; align-items: center; padding-left: 28px; position: relative; white-space: nowrap; }
.mc { position: absolute; right: 28px; top: 23px; width: 9px; height: 17px; color: #2c3542; }
.hi { background: #f0f1f6; border-bottom: 2px solid #d8dde3; height: 66px; }
.off { color: #9aa1ab; }
.off .mc { color: #9aa1ab; }
.rule { border-bottom: 2px solid #d8dde3; height: 66px; }
.hinfo { width: 24px; height: 24px; margin-left: 12px; color: #2c3542; }
.redbox { position: absolute; left: 440px; top: 951px; width: 314px; height: 66px; border: 4px solid #f00; z-index: 6; }
.m2 { left: 778px; top: 951px; width: 245px; height: 511px; border: 5px solid #f00; }
.m2 .mi { padding-left: 24px; }
.m2 .mi:first-child { margin-top: -3px; }
.m2 .mc { right: 27px; }
.sel-teal { color: #1a6e68; }
```
